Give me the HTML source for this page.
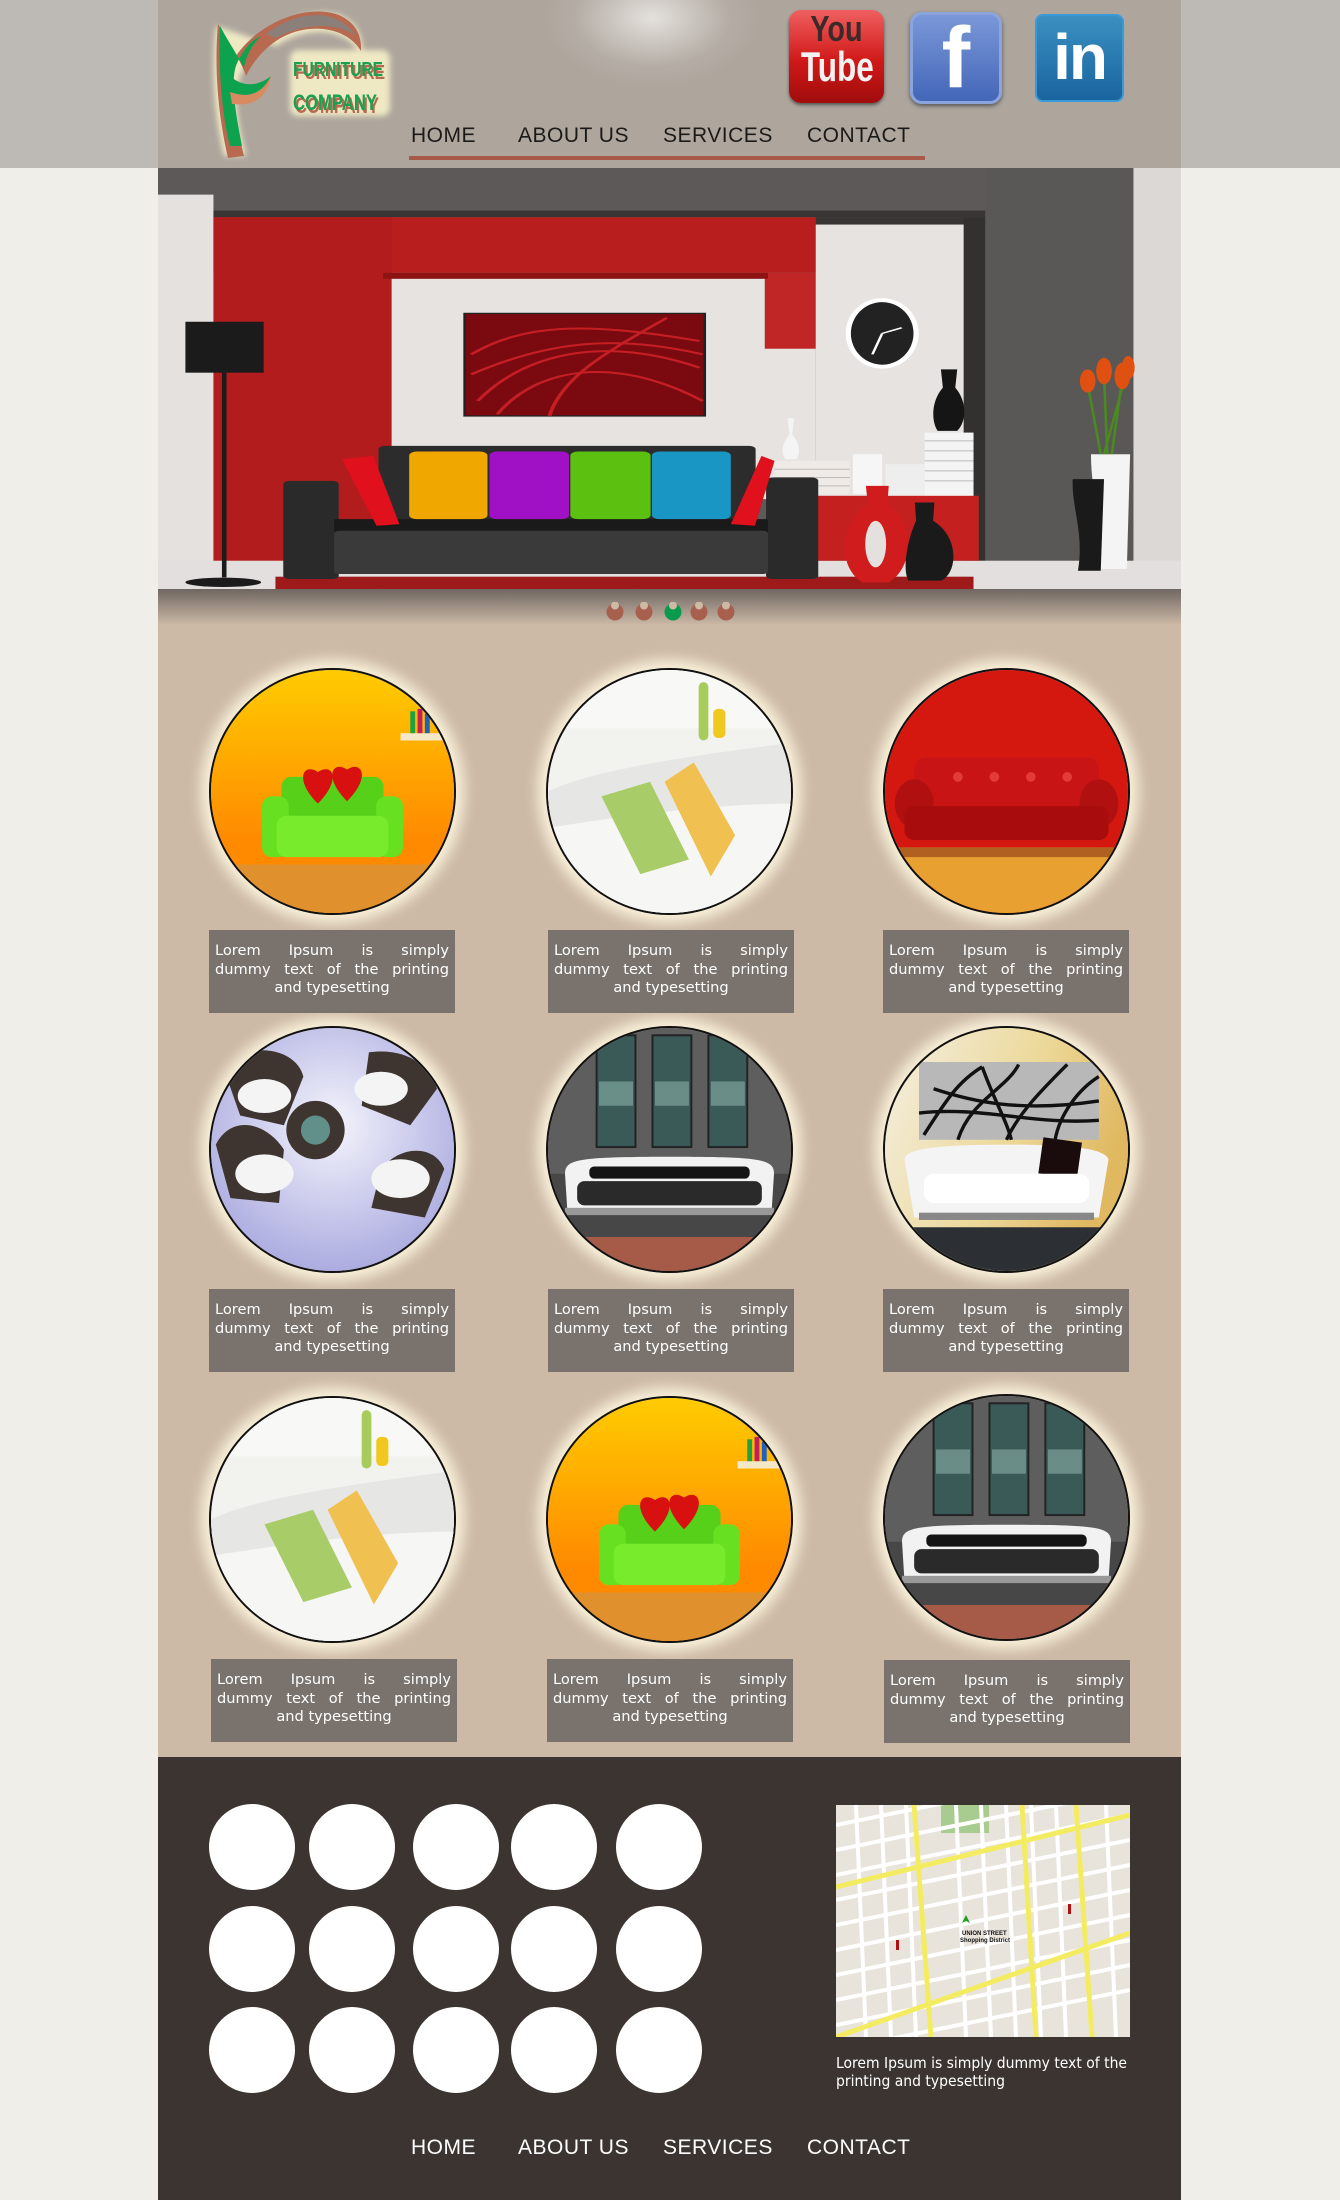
<!DOCTYPE html>
<html><head><meta charset="utf-8">
<style>
*{margin:0;padding:0;box-sizing:border-box}
html,body{width:1340px;height:2200px;overflow:hidden}
body{background:#efeee9;position:relative;font-family:"Liberation Sans","DejaVu Sans",sans-serif}
.abs{position:absolute}
#topband{left:0;top:0;width:1340px;height:168px;background:#bdbab5}
#header{left:158px;top:0;width:1023px;height:168px;background:radial-gradient(ellipse 110px 70px at 494px 18px,#e4e0dc 0%,#b4ada5 70%,#aea69d 100%),#aea69d}
.nav{position:absolute;font-size:21px;letter-spacing:0.5px;white-space:nowrap;font-family:"Liberation Sans",sans-serif}
#content{left:158px;top:589px;width:1023px;height:1168px;background:#ccb9a6}
#shadow{left:158px;top:589px;width:1023px;height:36px;background:linear-gradient(#6f6762,rgba(204,185,166,0))}
.circ{position:absolute;width:247px;height:247px;border-radius:50%;box-shadow:0 0 14px 8px #fbf3dc;overflow:hidden;border:2px solid #111}
.circ svg{display:block;width:100%;height:100%}
.box{position:absolute;width:246px;height:83px;background:#7a736d;color:#fff;font-family:"DejaVu Sans",sans-serif;font-size:14.6px;line-height:18.5px;padding:12px 6px 0 6px;text-align:justify;text-align-last:center}
.box span{display:block;text-align-last:justify}
#footer{left:158px;top:1757px;width:1023px;height:443px;background:#3c3430}
.fc{position:absolute;width:86px;height:86px;border-radius:50%;background:#fff}
</style></head><body>
<div id="topband" class="abs"></div>
<div id="header" class="abs">
 <!-- logo -->
 <svg class="abs" style="left:48px;top:6px" width="200" height="158" viewBox="0 0 200 158">
  <defs><filter id="gl"><feGaussianBlur stdDeviation="3"/></filter></defs>
  <g filter="url(#gl)" opacity="0.9"><path d="M10 20 C5 60 8 110 18 150 L40 150 C30 110 25 80 40 60 C60 30 90 0 130 8 C150 14 158 30 156 50 C140 20 100 20 70 40 Z" fill="#f6f0c8"/>
  <rect x="84" y="44" width="100" height="66" rx="8" fill="#f6f0c8"/></g>
  <path d="M12 18 C8 60 12 110 22 152 L38 150 C28 110 22 70 30 50 C50 20 95 -2 130 8 C150 15 156 30 155 45 C140 20 100 15 70 35 C55 45 45 60 40 70 C35 55 25 40 12 18Z" fill="#b86a50"/>
  <path d="M14 20 C12 60 16 110 24 140 L36 140 C28 100 24 70 32 55 C40 40 46 34 55 30 C45 40 40 50 38 62 C32 50 22 35 14 20Z" fill="#0da24e"/>
  <path d="M60 28 C90 5 130 0 150 30 C130 15 95 18 70 32Z" fill="#8a8079"/>
  <path d="M24 70 C35 80 50 82 65 70 C55 90 40 92 24 86Z" fill="#0da24e"/>
  <path d="M24 86 C40 92 55 90 65 70 C60 95 45 100 26 98Z" fill="#d98a60"/>
  <text x="89" y="73" font-family="Liberation Sans,sans-serif" font-weight="bold" font-size="20" fill="#b86a50" textLength="90" lengthAdjust="spacingAndGlyphs">FURNITURE</text>
  <text x="87" y="70" font-family="Liberation Sans,sans-serif" font-weight="bold" font-size="20" fill="#1aa050" textLength="90" lengthAdjust="spacingAndGlyphs">FURNITURE</text>
  <text x="89" y="107" font-family="Liberation Sans,sans-serif" font-weight="bold" font-size="22" fill="#b86a50" textLength="84" lengthAdjust="spacingAndGlyphs">COMPANY</text>
  <text x="87" y="104" font-family="Liberation Sans,sans-serif" font-weight="bold" font-size="22" fill="#1aa050" textLength="84" lengthAdjust="spacingAndGlyphs">COMPANY</text>
 </svg>
 <!-- youtube -->
 <div class="abs" style="left:631px;top:10px;width:95px;height:93px;border-radius:12px;background:linear-gradient(#f06060,#d01818 55%,#a00c0c);box-shadow:0 2px 3px #555"></div>
 <div class="abs" style="left:631px;top:12px;width:95px;text-align:center;font-family:'Liberation Sans',sans-serif;font-size:36px;line-height:34px;color:#3a2a2a;font-weight:bold;transform:scaleX(0.8)">You</div>
 <div class="abs" style="left:631px;top:46px;width:95px;text-align:center;font-family:'Liberation Sans',sans-serif;font-size:42px;line-height:42px;color:#f2f2f2;font-weight:bold;transform:scaleX(0.75)">Tube</div>
 <!-- facebook -->
 <div class="abs" style="left:752px;top:12px;width:92px;height:92px;border-radius:12px;background:linear-gradient(#7a98d8,#4466b8);border:3px solid #8aa4dc;box-shadow:0 2px 4px #555"></div>
 <div class="abs" style="left:752px;top:10px;width:92px;text-align:center;font-family:'Liberation Sans',sans-serif;font-size:86px;line-height:96px;color:#fff;font-weight:bold">f</div>
 <!-- linkedin -->
 <div class="abs" style="left:877px;top:14px;width:89px;height:88px;border-radius:8px;background:linear-gradient(#3a90c0,#1a64a0);border:2px solid #3a9ad8"></div>
 <div class="abs" style="left:877px;top:14px;width:89px;text-align:center;font-family:'Liberation Sans',sans-serif;font-size:64px;line-height:86px;color:#fff;font-weight:bold;letter-spacing:-2px">in</div>
 <!-- nav -->
 <div class="nav" style="left:253px;top:124px;color:#1c1a18">HOME</div>
 <div class="nav" style="left:360px;top:124px;color:#1c1a18">ABOUT US</div>
 <div class="nav" style="left:505px;top:124px;color:#1c1a18">SERVICES</div>
 <div class="nav" style="left:649px;top:124px;color:#1c1a18">CONTACT</div>
 <div class="abs" style="left:251px;top:156px;width:516px;height:4px;background:#a85a48"></div>
</div>

<!-- hero -->
<svg class="abs" style="left:158px;top:168px" width="1023" height="421" viewBox="0 0 1568 1265" preserveAspectRatio="none">
 <rect width="1568" height="1265" fill="#5c5958"/>
 <rect x="1495" y="0" width="73" height="1200" fill="#dcd8d6"/>
 <rect x="0" y="80" width="85" height="1110" fill="#e4e1df"/>
 <rect x="85" y="128" width="1183" height="20" fill="#3a3535"/>
 <rect x="1008" y="148" width="260" height="22" fill="#3a3535"/>
 <rect x="1008" y="170" width="227" height="820" fill="#e6e3e1"/>
 <rect x="358" y="315" width="650" height="680" fill="#e6e3e1"/>
 <rect x="85" y="148" width="923" height="167" fill="#b81e1e"/>
 <rect x="85" y="148" width="273" height="1040" fill="#b21c1c"/>
 <rect x="930" y="315" width="78" height="228" fill="#c02626"/>
 <rect x="345" y="315" width="590" height="18" fill="#8e1414"/>
 <rect x="1235" y="148" width="33" height="1040" fill="#333030"/>
 <rect x="1268" y="0" width="227" height="1190" fill="#5a5757"/>
 <rect x="0" y="1180" width="1568" height="85" fill="#e2dfde"/>
 <rect x="180" y="1228" width="1070" height="37" fill="#9e1a1a"/>
 <rect x="470" y="437" width="368" height="308" fill="#7a0a10" stroke="#222" stroke-width="4"/>
 <g stroke="#d8242a" stroke-width="6" fill="none" opacity="0.8">
  <path d="M480 560 C560 470 650 460 830 520"/><path d="M490 700 C560 560 680 500 830 600"/><path d="M520 740 C580 600 700 560 835 700"/><path d="M600 745 C620 620 700 540 780 450"/><path d="M480 620 C600 520 700 500 835 560"/>
 </g>
 <ellipse cx="1110" cy="497" rx="56" ry="106" fill="#fff"/>
 <ellipse cx="1110" cy="497" rx="48" ry="94" fill="#222"/>
 <path d="M1110 497 L1140 480 M1110 497 L1095 560" stroke="#fff" stroke-width="4"/>
 <rect x="42" y="462" width="120" height="153" fill="#1b1b1b"/>
 <rect x="98" y="615" width="7" height="615" fill="#1b1b1b"/>
 <ellipse cx="100" cy="1245" rx="58" ry="14" fill="#1b1b1b"/>
 <rect x="1175" y="795" width="75" height="195" fill="#f4f4f4"/>
 <rect x="945" y="880" width="115" height="100" fill="#efeae6"/>
 <rect x="1065" y="860" width="45" height="120" fill="#f6f6f6"/>
 <rect x="1115" y="890" width="60" height="95" fill="#eeeeee"/>
 <g stroke="#bbb" stroke-width="3"><path d="M945 905H1060M945 930H1060M945 955H1060M1175 820H1250M1175 850H1250M1175 880H1250M1175 910H1250M1175 940H1250"/></g>
 <rect x="1010" y="985" width="248" height="195" fill="#c42020"/>
 <path d="M1200 605 L1225 605 L1222 660 C1240 700 1240 760 1225 790 L1195 790 C1185 760 1185 700 1203 660Z" fill="#151515"/>
 <path d="M965 752 L975 752 L972 800 C985 830 985 860 978 875 L962 875 C955 860 955 830 968 800Z" fill="#f4f4f4"/>
 <rect x="338" y="835" width="578" height="230" rx="10" fill="#2c2c2c"/>
 <rect x="192" y="940" width="85" height="295" rx="10" fill="#2a2a2a"/>
 <rect x="932" y="930" width="80" height="305" rx="10" fill="#2a2a2a"/>
 <rect x="270" y="1055" width="665" height="40" fill="#1a1a1a"/>
 <rect x="270" y="1090" width="665" height="130" rx="8" fill="#3a3a3a"/>
 <path d="M282 875 L330 865 L370 1070 L335 1075Z" fill="#e0101c"/>
 <rect x="385" y="852" width="120" height="203" rx="12" fill="#f0a800"/>
 <rect x="508" y="852" width="122" height="203" rx="12" fill="#a010c4"/>
 <rect x="632" y="852" width="123" height="203" rx="12" fill="#5cc010"/>
 <rect x="757" y="852" width="121" height="203" rx="12" fill="#1a96c4"/>
 <path d="M925 865 L945 880 L915 1075 L878 1070Z" fill="#e0101c"/>
 <path d="M1085 955 L1120 955 L1118 1010 C1160 1060 1160 1200 1120 1245 L1080 1245 C1040 1200 1045 1060 1088 1010Z" fill="#d01c1c"/>
 <ellipse cx="1100" cy="1130" rx="16" ry="70" fill="#e4e0de"/>
 <path d="M1160 1005 L1190 1005 L1188 1060 C1230 1110 1225 1220 1200 1240 L1150 1240 C1140 1200 1150 1110 1162 1060Z" fill="#1a1a1a"/>
 <path d="M1430 860 L1490 860 L1485 1205 L1440 1205 C1455 1100 1430 1000 1430 860Z" fill="#f4f4f4"/>
 <path d="M1402 935 L1450 935 L1445 1210 L1410 1210 C1420 1100 1400 1020 1402 935Z" fill="#1a1a1a"/>
 <g stroke="#4a8a20" stroke-width="4"><path d="M1445 860 L1425 650M1455 860 L1450 620M1462 860 L1478 630M1450 860 L1485 610"/></g>
 <g fill="#e05010"><ellipse cx="1425" cy="640" rx="12" ry="35"/><ellipse cx="1450" cy="610" rx="12" ry="40"/><ellipse cx="1478" cy="625" rx="12" ry="40"/><ellipse cx="1487" cy="600" rx="10" ry="35"/></g>
</svg>

<div id="content" class="abs"></div>
<div id="shadow" class="abs"></div>
<!-- dots -->
<svg class="abs" style="left:600px;top:602px" width="140" height="22" viewBox="0 0 140 22">
 <g fill="#a8604e"><circle cx="15" cy="10" r="8.5"/><circle cx="44" cy="10" r="8.5"/><circle cx="99" cy="10" r="8.5"/><circle cx="126" cy="10" r="8.5"/></g>
 <circle cx="73" cy="10" r="8.5" fill="#0a9a4f"/>
 <g fill="#ccb9a6"><circle cx="15" cy="3.5" r="4"/><circle cx="44" cy="3.5" r="4"/><circle cx="73" cy="3.5" r="4"/><circle cx="99" cy="3.5" r="4"/><circle cx="126" cy="3.5" r="4"/></g>
</svg>

<!-- gallery -->
<div class="circ" style="left:209px;top:668px"><svg viewBox="0 0 100 100" preserveAspectRatio="none">
 <defs><linearGradient id="ga" x1="0" y1="0" x2="0" y2="1"><stop offset="0" stop-color="#ffcc00"/><stop offset="0.7" stop-color="#ff8a00"/></linearGradient></defs>
 <rect width="100" height="100" fill="url(#ga)"/><rect y="80" width="100" height="20" fill="#e0902c"/>
 <rect x="78" y="26" width="20" height="3" fill="#f4e8c8"/><rect x="82" y="17" width="2" height="9" fill="#20a040"/><rect x="85" y="16" width="2" height="10" fill="#c02060"/><rect x="88" y="18" width="2" height="8" fill="#2060c0"/>
 <rect x="29" y="44" width="42" height="20" rx="4" fill="#56d018"/><rect x="21" y="52" width="11" height="25" rx="4" fill="#66e020"/><rect x="68" y="52" width="11" height="25" rx="4" fill="#66e020"/><rect x="27" y="60" width="46" height="17" rx="4" fill="#78ec2c"/>
 <path d="M44 55 C34 45 38 38 44 42 C50 38 54 45 44 55Z" fill="#d81010"/><path d="M56 54 C46 44 50 37 56 41 C62 37 66 44 56 54Z" fill="#d81010"/>
</svg></div>
<div class="circ" style="left:546px;top:668px"><svg viewBox="0 0 100 100" preserveAspectRatio="none">
 <rect width="100" height="100" fill="#f2f2ef"/><rect y="0" width="100" height="24" fill="#f8f8f6"/>
 <path d="M0 50 C20 40 70 34 100 30 L100 100 L0 100Z" fill="#e6e6e4"/><path d="M0 65 C30 60 70 55 100 55 L100 100 L0 100Z" fill="#f6f6f4"/>
 <rect x="62" y="5" width="4" height="24" rx="2" fill="#a8cc5c"/><rect x="68" y="16" width="5" height="12" rx="2" fill="#f0c820"/>
 <path d="M22 52 L42 46 L58 78 L38 84Z" fill="#a8cc68"/><path d="M48 46 L60 38 L77 68 L67 85Z" fill="#f0c050"/>
</svg></div>
<div class="circ" style="left:883px;top:668px"><svg viewBox="0 0 100 100" preserveAspectRatio="none">
 <rect width="100" height="100" fill="#d41810"/><rect y="73" width="100" height="27" fill="#e8a030"/><rect y="73" width="100" height="4" fill="#b06020"/>
 <rect x="12" y="36" width="76" height="24" rx="5" fill="#c81414"/><ellipse cx="12" cy="55" rx="8" ry="10" fill="#b01010"/><ellipse cx="88" cy="55" rx="8" ry="10" fill="#b01010"/>
 <rect x="8" y="56" width="84" height="14" rx="4" fill="#a80c0c"/><g fill="#ff6060" opacity="0.5"><circle cx="30" cy="44" r="2"/><circle cx="45" cy="44" r="2"/><circle cx="60" cy="44" r="2"/><circle cx="75" cy="44" r="2"/></g>
</svg></div>
<div class="circ" style="left:209px;top:1026px"><svg viewBox="0 0 100 100" preserveAspectRatio="none">
 <defs><radialGradient id="gd" cx="0.5" cy="0.4" r="0.7"><stop offset="0" stop-color="#f4f4fc"/><stop offset="1" stop-color="#a0a0dc"/></radialGradient></defs>
 <rect width="100" height="100" fill="url(#gd)"/>
 <g fill="#3e3430"><path d="M5 16 C15 5 35 8 38 20 L30 40 L12 36Z"/><path d="M65 10 C80 8 90 15 93 25 L82 40 L62 32Z"/><path d="M2 48 C8 36 22 38 30 50 L28 72 L8 70Z"/><path d="M70 58 C78 48 92 48 96 58 L88 78 L66 74Z"/><circle cx="43" cy="42" r="12"/></g>
 <g fill="#f4f4f4"><ellipse cx="22" cy="28" rx="11" ry="7"/><ellipse cx="70" cy="25" rx="11" ry="7"/><ellipse cx="22" cy="60" rx="12" ry="8"/><ellipse cx="78" cy="62" rx="12" ry="8"/></g>
 <circle cx="43" cy="42" r="6" fill="#70b8b0" opacity="0.7"/>
</svg></div>
<div class="circ" style="left:546px;top:1026px"><svg viewBox="0 0 100 100" preserveAspectRatio="none">
 <rect width="100" height="100" fill="#5e5e5e"/><rect y="60" width="100" height="26" fill="#474747"/><rect y="86" width="100" height="14" fill="#a65a48"/>
 <g fill="#3a5a58" stroke="#222" stroke-width="0.8"><rect x="20" y="3" width="16" height="46"/><rect x="43" y="3" width="16" height="46"/><rect x="66" y="3" width="16" height="46"/></g>
 <g fill="#8ab0a8" opacity="0.6"><rect x="21" y="22" width="14" height="10"/><rect x="44" y="22" width="14" height="10"/><rect x="67" y="22" width="14" height="10"/></g>
 <path d="M7 60 C7 54 12 53 50 53 C88 53 93 54 93 60 L92 76 L8 76Z" fill="#f2f2f2"/>
 <rect x="17" y="57" width="66" height="5" rx="2" fill="#151515"/><rect x="12" y="63" width="76" height="10" rx="3" fill="#2a2a2a"/><rect x="7" y="74" width="86" height="3" fill="#999"/>
</svg></div>
<div class="circ" style="left:883px;top:1026px"><svg viewBox="0 0 100 100" preserveAspectRatio="none">
 <defs><linearGradient id="gf" x1="0" y1="0" x2="1" y2="0.4"><stop offset="0" stop-color="#f4f0e4"/><stop offset="0.6" stop-color="#ecd898"/><stop offset="1" stop-color="#e0b860"/></linearGradient></defs>
 <rect width="100" height="100" fill="url(#gf)"/><rect y="82" width="100" height="18" fill="#2c3034"/>
 <rect x="14" y="14" width="74" height="32" fill="#b8b8b8"/>
 <g stroke="#111" stroke-width="1.4" fill="none"><path d="M16 44 C25 30 30 22 40 16M30 46 C35 30 50 25 55 15M50 46 C55 35 65 25 75 15M70 46 C72 35 80 25 88 20M20 25 C35 30 55 35 88 30M14 35 C40 32 60 40 88 38M40 16 C45 30 50 38 52 46"/></g>
 <path d="M8 54 C8 50 20 48 50 48 C80 48 90 50 92 54 L88 78 L12 78Z" fill="#f4f4f4"/><rect x="64" y="46" width="16" height="15" fill="#1a0c0c" transform="rotate(8 72 54)"/>
 <rect x="16" y="60" width="68" height="12" rx="4" fill="#ffffff"/><rect x="14" y="76" width="72" height="3" fill="#888"/>
</svg></div>
<div class="circ" style="left:209px;top:1396px"><svg viewBox="0 0 100 100" preserveAspectRatio="none">
 <rect width="100" height="100" fill="#f2f2ef"/><rect y="0" width="100" height="24" fill="#f8f8f6"/>
 <path d="M0 50 C20 40 70 34 100 30 L100 100 L0 100Z" fill="#e6e6e4"/><path d="M0 65 C30 60 70 55 100 55 L100 100 L0 100Z" fill="#f6f6f4"/>
 <rect x="62" y="5" width="4" height="24" rx="2" fill="#a8cc5c"/><rect x="68" y="16" width="5" height="12" rx="2" fill="#f0c820"/>
 <path d="M22 52 L42 46 L58 78 L38 84Z" fill="#a8cc68"/><path d="M48 46 L60 38 L77 68 L67 85Z" fill="#f0c050"/>
</svg></div>
<div class="circ" style="left:546px;top:1396px"><svg viewBox="0 0 100 100" preserveAspectRatio="none">
 <rect width="100" height="100" fill="url(#ga)"/><rect y="80" width="100" height="20" fill="#e0902c"/>
 <rect x="78" y="26" width="20" height="3" fill="#f4e8c8"/><rect x="82" y="17" width="2" height="9" fill="#20a040"/><rect x="85" y="16" width="2" height="10" fill="#c02060"/><rect x="88" y="18" width="2" height="8" fill="#2060c0"/>
 <rect x="29" y="44" width="42" height="20" rx="4" fill="#56d018"/><rect x="21" y="52" width="11" height="25" rx="4" fill="#66e020"/><rect x="68" y="52" width="11" height="25" rx="4" fill="#66e020"/><rect x="27" y="60" width="46" height="17" rx="4" fill="#78ec2c"/>
 <path d="M44 55 C34 45 38 38 44 42 C50 38 54 45 44 55Z" fill="#d81010"/><path d="M56 54 C46 44 50 37 56 41 C62 37 66 44 56 54Z" fill="#d81010"/>
</svg></div>
<div class="circ" style="left:883px;top:1394px"><svg viewBox="0 0 100 100" preserveAspectRatio="none">
 <rect width="100" height="100" fill="#5e5e5e"/><rect y="60" width="100" height="26" fill="#474747"/><rect y="86" width="100" height="14" fill="#a65a48"/>
 <g fill="#3a5a58" stroke="#222" stroke-width="0.8"><rect x="20" y="3" width="16" height="46"/><rect x="43" y="3" width="16" height="46"/><rect x="66" y="3" width="16" height="46"/></g>
 <g fill="#8ab0a8" opacity="0.6"><rect x="21" y="22" width="14" height="10"/><rect x="44" y="22" width="14" height="10"/><rect x="67" y="22" width="14" height="10"/></g>
 <path d="M7 60 C7 54 12 53 50 53 C88 53 93 54 93 60 L92 76 L8 76Z" fill="#f2f2f2"/>
 <rect x="17" y="57" width="66" height="5" rx="2" fill="#151515"/><rect x="12" y="63" width="76" height="10" rx="3" fill="#2a2a2a"/><rect x="7" y="74" width="86" height="3" fill="#999"/>
</svg></div>

<div class="box" style="left:209px;top:930px"><span>Lorem Ipsum is simply</span><span>dummy text of the printing</span>and typesetting</div>
<div class="box" style="left:548px;top:930px"><span>Lorem Ipsum is simply</span><span>dummy text of the printing</span>and typesetting</div>
<div class="box" style="left:883px;top:930px"><span>Lorem Ipsum is simply</span><span>dummy text of the printing</span>and typesetting</div>
<div class="box" style="left:209px;top:1289px"><span>Lorem Ipsum is simply</span><span>dummy text of the printing</span>and typesetting</div>
<div class="box" style="left:548px;top:1289px"><span>Lorem Ipsum is simply</span><span>dummy text of the printing</span>and typesetting</div>
<div class="box" style="left:883px;top:1289px"><span>Lorem Ipsum is simply</span><span>dummy text of the printing</span>and typesetting</div>
<div class="box" style="left:211px;top:1659px"><span>Lorem Ipsum is simply</span><span>dummy text of the printing</span>and typesetting</div>
<div class="box" style="left:547px;top:1659px"><span>Lorem Ipsum is simply</span><span>dummy text of the printing</span>and typesetting</div>
<div class="box" style="left:884px;top:1660px"><span>Lorem Ipsum is simply</span><span>dummy text of the printing</span>and typesetting</div>

<div id="footer" class="abs"></div>
<div class="fc" style="left:209px;top:1804px"></div><div class="fc" style="left:309px;top:1804px"></div><div class="fc" style="left:413px;top:1804px"></div><div class="fc" style="left:511px;top:1804px"></div><div class="fc" style="left:616px;top:1804px"></div>
<div class="fc" style="left:209px;top:1906px"></div><div class="fc" style="left:309px;top:1906px"></div><div class="fc" style="left:413px;top:1906px"></div><div class="fc" style="left:511px;top:1906px"></div><div class="fc" style="left:616px;top:1906px"></div>
<div class="fc" style="left:209px;top:2007px"></div><div class="fc" style="left:309px;top:2007px"></div><div class="fc" style="left:413px;top:2007px"></div><div class="fc" style="left:511px;top:2007px"></div><div class="fc" style="left:616px;top:2007px"></div>
<svg class="abs" style="left:836px;top:1805px" width="294" height="232" viewBox="0 0 294 232">
 <rect width="294" height="232" fill="#e8e4dc"/>
 <rect x="105" y="0" width="48" height="28" fill="#a8cc90"/>
 <g stroke="#ffffff" stroke-width="4">
  <path d="M0 20 L294 -40M0 45 L294 -15M0 70 L294 10M0 95 L294 35M0 120 L294 60M0 145 L294 85M0 170 L294 110M0 195 L294 135M0 220 L294 160M0 245 L294 185"/>
  <path d="M20 0 L30 232M45 0 L55 232M70 0 L80 232M120 0 L130 232M145 0 L155 232M170 0 L180 232M195 0 L205 232M220 0 L230 232M270 0 L280 232"/>
 </g>
 <g stroke="#f4ec60" stroke-width="5" fill="none">
  <path d="M0 82 L294 10M0 232 L294 128"/>
  <path d="M78 0 L95 232M240 0 L256 232M186 0 L200 232"/>
 </g>
 <path d="M126 118 l4 -8 l4 8 l-4 -2z" fill="#20a020"/>
 <text x="126" y="130" font-family="Liberation Sans,sans-serif" font-size="6" font-weight="bold" fill="#111">UNION STREET</text>
 <text x="124" y="137" font-family="Liberation Sans,sans-serif" font-size="6" font-weight="bold" fill="#111">Shopping District</text>
 <rect x="60" y="135" width="3" height="10" fill="#b01010"/><rect x="232" y="99" width="3" height="10" fill="#b01010"/>
</svg>
<div class="abs" style="left:836px;top:2054px;width:300px;color:#fff;font-size:15.5px;line-height:18px;font-family:'DejaVu Sans Condensed','DejaVu Sans',sans-serif">Lorem Ipsum is simply dummy text of the printing and typesetting</div>
<div class="nav" style="left:411px;top:2136px;color:#fff">HOME</div>
<div class="nav" style="left:518px;top:2136px;color:#fff">ABOUT US</div>
<div class="nav" style="left:663px;top:2136px;color:#fff">SERVICES</div>
<div class="nav" style="left:807px;top:2136px;color:#fff">CONTACT</div>
</body></html>
